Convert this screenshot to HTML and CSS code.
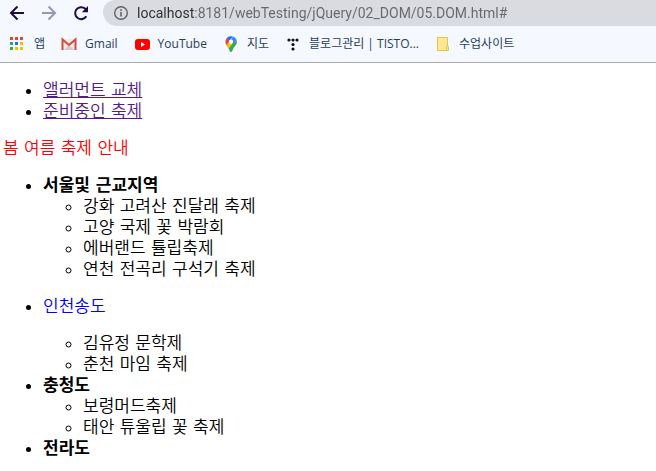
FILE: index.html
```html
<!DOCTYPE html>
<html lang="ko">
<head>
  <meta charset="UTF-8">
  <meta name="viewport" content="width=device-width, initial-scale=1">
  <title>05.DOM</title>
  <link rel="stylesheet" href="styles.css">
</head>
<body>

  <header class="browser">
    <div class="toolbar">
      <div class="nav-btns">
        <button class="nav-btn" type="button" aria-label="뒤로">
          <svg width="16" height="16" viewBox="0 0 16 16"><path d="M15 8H2M8.500 1.500L2 8l6.500 6.500" /></svg>
        </button>
        <button class="nav-btn off" type="button" aria-label="앞으로">
          <svg width="16" height="16" viewBox="0 0 16 16"><path d="M1 8h13M7.500 1.500L14 8l-6.500 6.500" /></svg>
        </button>
        <button class="nav-btn" type="button" aria-label="새로고침">
          <svg width="16" height="16" viewBox="0 0 16 16"><path d="M13.300 11.200A6 6 0 1 1 12.300 3.800L13.500 5" /><path class="fill" d="M15 1v6.200H8.800z" /></svg>
        </button>
      </div>
      <div class="omnibox">
        <svg width="16" height="16" viewBox="0 0 16 16" fill="none" stroke="#5f6368"><circle cx="8" cy="8" r="6.300" stroke-width="1.400" /><path d="M8 7v4.500M8 4.300V6" stroke-width="1.600" /></svg>
        <input class="url" type="text" aria-label="주소" value="localhost:8181/webTesting/jQuery/02_DOM/05.DOM.html#">
      </div>
    </div>

    <nav class="bookmarks">
      <a class="bookmark" href="#">
        <svg width="16" height="14" viewBox="0 0 16 14">
          <path fill="#ea4335" d="M0 0h3v3H0zM5 0h3v3H5zM10 0h3v3h-3z" />
          <path fill="#34a853" d="M0 5h3v3H0zM0 10h3v3H0z" />
          <path fill="#1a73e8" d="M5 5h3v3H5z" />
          <path fill="#fbbc04" d="M10 5h3v3h-3zM5 10h3v3H5zM10 10h3v3h-3z" />
        </svg>
        <span>앱</span>
      </a>
      <a class="bookmark" href="#">
        <svg width="16" height="16" viewBox="0 0 16 16">
          <path fill="#eceae8" d="M1 3h14v11H1z" />
          <path fill="#d0cdca" d="M3 14l5-5 5 5z" />
          <path fill="none" stroke="#d54b3d" stroke-width="2" d="M1.500 14V3.500L8 9l6.500-5.500V14" />
        </svg>
        <span>Gmail</span>
      </a>
      <a class="bookmark" href="#">
        <svg width="16" height="16" viewBox="0 0 16 16">
          <rect x="1" y="3" width="15" height="11" rx="3" fill="#f00" />
          <path fill="#fff" d="M7 6l4 2.500L7 11z" />
        </svg>
        <span>YouTube</span>
      </a>
      <a class="bookmark" href="#">
        <svg width="16" height="16" viewBox="0 0 16 16">
          <path fill="#34a853" d="M13.700 4.500c.800 4-1.500 5-3 7.300C9.500 13.500 9.500 16 8 16s-1.300-2-2.300-3.600l-1-1.600z" />
          <path fill="#fbbc04" d="M2.900 8l3-1 3.600 1-3.800 4.500C4.500 11 3.300 9.500 2.900 8z" />
          <path fill="#ea4335" d="M3.600 2.300L7 5 3.500 9C1.900 6.500 2.200 4 3.600 2.300z" />
          <path fill="#1a73e8" d="M3.600 2.300C5 .4 7.500-.2 9.700.5L6.500 5z" />
          <path fill="#4285f4" d="M9.700.5c2 .6 3.400 2 4 4L9.500 8 8 4z" />
          <circle cx="8" cy="5.700" r="2.100" fill="#fff" />
        </svg>
        <span>지도</span>
      </a>
      <a class="bookmark" href="#">
        <svg width="16" height="16" viewBox="0 0 16 16" fill="#111">
          <circle cx="4" cy="4" r="1.600" /><circle cx="8" cy="4" r="1.600" /><circle cx="12" cy="4" r="1.600" />
          <circle cx="8" cy="8.500" r="1.600" /><circle cx="8" cy="13" r="1.600" />
        </svg>
        <span>블로그관리 | TISTO...</span>
      </a>
      <button class="bookmark" type="button">
        <svg width="16" height="16" viewBox="0 0 16 16">
          <path fill="#ffe793" stroke="#e8c34a" d="M2.500 1.500h10v9h1v4h-11z" />
          <path fill="none" stroke="#e8c34a" d="M11.500 14v-3.500h1" />
        </svg>
        <span>수업사이트</span>
      </button>
    </nav>
  </header>

  <main class="page">
    <ul>
      <li><a class="visited" href="#">앨러먼트 교체</a></li>
      <li><a class="visited" href="#">준비중인 축제</a></li>
    </ul>

    <p class="title">봄 여름 축제 안내</p>

    <ul>
      <li><b>서울및 근교지역</b>
        <ul>
          <li>강화 고려산 진달래 축제</li>
          <li>고양 국제 꽃 박람회</li>
          <li>에버랜드 튤립축제</li>
          <li>연천 전곡리 구석기 축제</li>
        </ul>
      </li>
      <li><p class="replaced">인천송도</p>
        <ul>
          <li>김유정 문학제</li>
          <li>춘천 마임 축제</li>
        </ul>
      </li>
      <li><b>충청도</b>
        <ul>
          <li>보령머드축제</li>
          <li>태안 튜울립 꽃 축제</li>
        </ul>
      </li>
      <li><b>전라도</b></li>
    </ul>
  </main>

</body>
</html>
```
FILE: styles.css
```css
body {
  margin: 0;
  background: #fff;
  color: #000;
  font-family: "DejaVu Sans", "Noto Sans CJK KR", sans-serif;
}

/* browser bar */
.browser {
  background: #f5f8fe;
  border-bottom: 1px solid #a9abae;
}

.toolbar {
  display: flex;
  align-items: center;
  gap: 14px;
  height: 26px;
  padding-left: 9px;
}

.nav-btns {
  display: flex;
  gap: 16px;
}

.nav-btn {
  width: 16px;
  height: 24px;
  padding: 0;
  border: 0;
  background: none;
  line-height: 0;
}

.nav-btn path {
  fill: none;
  stroke: #1c0b45;
  stroke-width: 2;
}

.nav-btn .fill {
  fill: #1c0b45;
  stroke: none;
}

.nav-btn.off path {
  stroke: #9c94b8;
}

.omnibox {
  flex: 1;
  display: flex;
  align-items: center;
  gap: 8px;
  height: 26px;
  padding-left: 10px;
  background: #dadbe0;
  border-radius: 12px 0 0 14px;
}

.url {
  flex: 1;
  min-width: 0;
  padding: 0;
  border: 0;
  font-family: Roboto, sans-serif;
  font-size: 14px;
  line-height: 20px;
  /* host is darker than the path */
  color: transparent;
  background: linear-gradient(to right, #2b2c30 58px, #65676c 58px);
  -webkit-background-clip: text;
  background-clip: text;
}

.bookmarks {
  display: flex;
  align-items: center;
  gap: 16px;
  height: 36px;
  padding-left: 10px;
  white-space: nowrap;
}

.bookmark {
  display: flex;
  align-items: center;
  gap: 8px;
  padding: 0;
  border: 0;
  background: none;
  color: #25405f;
  font-family: "Open Sans", "Noto Sans CJK KR", sans-serif;
  font-size: 12px;
  line-height: 18px;
  text-decoration: none;
}

.bookmark svg {
  flex: none;
}

/* page */
.page {
  padding: 17px 3px 13px;
  font-size: 17px;
  font-weight: 350;
  line-height: 21px;
}

.page ul {
  margin: 0;
  padding-left: 40px;
}

.page p {
  margin: 16px 0;
}

.page b {
  font-weight: 700;
}

.visited {
  color: #551a8b;
}

.title {
  color: #f00;
}

.replaced {
  color: #00f;
}
```
